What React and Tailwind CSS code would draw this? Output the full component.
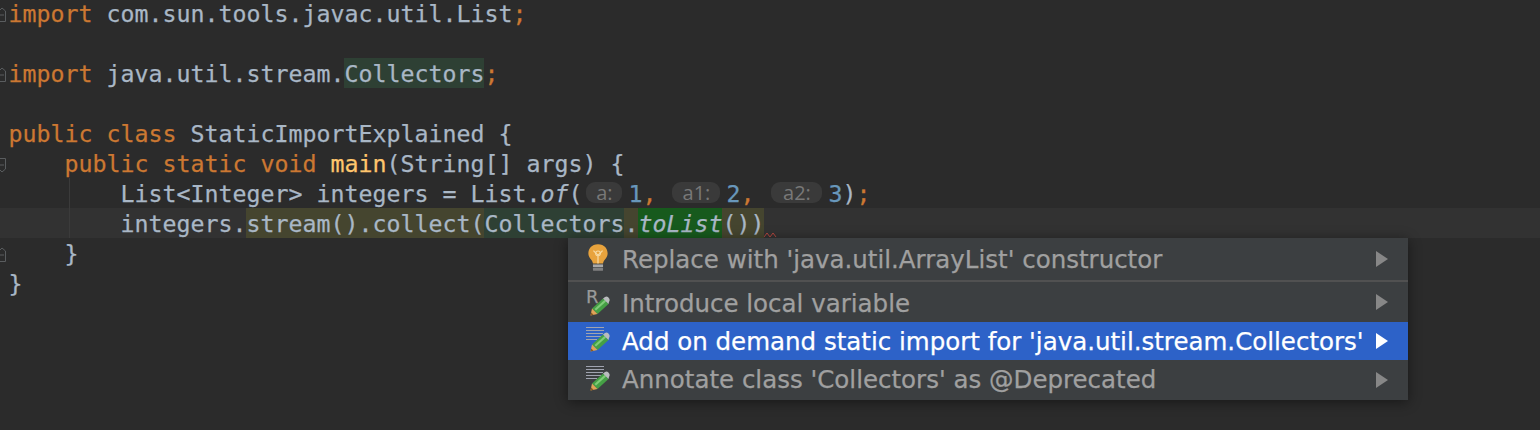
import React from 'react'

const kw = 'text-[#cc7832]'
const num = 'text-[#6897bb]'
const olive = 'inline-block h-[30px] bg-[#45452f]'
const green = 'inline-block h-[30px] bg-[#2e4034]'

function Fold({ up }) {
  return (
    <svg width="7" height="16" viewBox="0 0 7 16" className="mt-[9px] shrink-0" fill="none" stroke="#5a5d5f" strokeWidth="1">
      {up ? <path d="M-1 4 L2 1 L5.5 4 V14.5 H-1" /> : <path d="M-1 1.5 H5.5 V12 L2 15 L-1 12" />}
      <path d="M0 8 H4" />
    </svg>
  )
}

function Line({ fold, active, guide, children }) {
  return (
    <div className={`relative flex h-[30px] whitespace-pre leading-[32px] ${active ? 'bg-[#323232]' : ''}`}>
      <div className="w-[8.5px] shrink-0">{fold}</div>
      {guide && <div className="absolute left-[69px] top-0 h-full w-px bg-[#3b3b3b]" />}
      <div className="text-[#a9b7c6]">{children}</div>
    </div>
  )
}

function Hint({ label, className }) {
  return (
    <span className={`mr-[6px] inline-block h-[21px] rounded-[9px] bg-[#3a3a3a] text-center align-[2px] font-['Open_Sans',sans-serif] text-[20px] leading-[21px] text-[#787878] [-webkit-text-stroke:0px] ${className}`}>
      {label}
    </span>
  )
}

function Pencil() {
  return (
    <svg width="20" height="20" viewBox="0 0 20 20" className="absolute left-[4px] top-[3px]">
      <path d="M2 12.5 L13 2.5 L18.5 8 L7.5 18 Z" fill="#45a045" />
      <path d="M4.5 13 L14.5 4 L16 5.5 L6 14.5 Z" fill="#7fcb78" />
      <path d="M13 2.5 L15 1 Q16.5 0 18 1 L19.5 3 Q20 4.5 19 6 L18.5 8 Z" fill="#b9bcbd" />
      <path d="M2 12.5 L7.5 18 L0.5 19.5 Z" fill="#e0a458" />
      <path d="M0.5 19.5 L1.2 16.5 L3.6 18.8 Z" fill="#8a5a22" />
    </svg>
  )
}

function ItemIcon({ type }) {
  if (type === 'bulb') {
    return (
      <svg width="22" height="30" viewBox="0 0 24 32" className="ml-px mt-[-2px]">
        <path d="M12 1 C5 1 1.5 6 1.5 11 C1.5 16 6 18 6.5 22 H17.5 C18 18 22.5 16 22.5 11 C22.5 6 19 1 12 1 Z" fill="#e8a33d" />
        <path d="M7 8 L12 13 L17 8 M12 13 V22" stroke="#f6d9a0" strokeWidth="1.4" fill="none" />
        <circle cx="12" cy="11" r="2.6" stroke="#f6d9a0" strokeWidth="1.2" fill="none" />
        <rect x="6.5" y="23" width="11" height="3" fill="#a8a8a8" />
        <rect x="6.5" y="26.5" width="11" height="3.5" rx="1" fill="#808080" />
      </svg>
    )
  }
  return (
    <div className={`relative h-[24px] w-[24px] ${type === 'r' ? 'mt-[6px]' : ''}`}>
      {type === 'r' && <span className="absolute left-0 top-[-6px] text-[18px] leading-[20px] text-[#9a9a9a]">R</span>}
      {type === 'lines' && (
        <div className="absolute left-0 top-[-2px] flex flex-col gap-[2px]">
          {[18, 18, 17, 15, 11].map((w, i) => (
            <div key={i} className="h-px bg-[#a0a4b0]" style={{ width: w }} />
          ))}
        </div>
      )}
      <Pencil />
    </div>
  )
}

function MenuItem({ icon, label, selected, className, textClass }) {
  return (
    <div className={`relative flex items-center pl-[18px] ${selected ? 'bg-[#2d62c8] text-white' : 'text-[#a0a0a0]'} ${className}`}>
      <div className="flex w-[36px] shrink-0 items-center">
        <ItemIcon type={icon} />
      </div>
      <span className={`whitespace-pre ${textClass}`}>{label}</span>
      <div className={`absolute right-[20px] h-0 w-0 border-y-[8px] border-l-[12px] border-y-transparent ${selected ? 'border-l-white' : 'border-l-[#878787]'}`} />
    </div>
  )
}

export default function App() {
  return (
    <div className="relative h-[430px] w-[1540px] overflow-hidden bg-[#2b2b2b] font-['DejaVu_Sans_Mono',monospace] text-[23.25px] [-webkit-text-stroke:0.25px]">
      <div className="-mt-[2px]">
        <Line fold={<Fold up />}>
          <span className={kw}>import</span> com.sun.tools.javac.util.List<span className={kw}>;</span>
        </Line>
        <Line />
        <Line fold={<Fold up />}>
          <span className={kw}>import</span> java.util.stream.<span className={green}>Collectors</span><span className={kw}>;</span>
        </Line>
        <Line />
        <Line>
          <span className={kw}>public class</span> StaticImportExplained {'{'}
        </Line>
        <Line fold={<Fold />}>
          {'    '}<span className={kw}>public static void</span> <span className="text-[#ffc66d]">main</span>(String[] args) {'{'}
        </Line>
        <Line guide>
          {'        '}List&lt;Integer&gt; integers = List.<span className="italic">of</span>(<Hint label="a:" className="ml-[4px] w-[36px]" /><span className={num}>1</span><span className={kw}>,</span> <Hint label="a1:" className="ml-[2px] w-[48px]" /><span className={num}>2</span><span className={kw}>,</span> <Hint label="a2:" className="ml-[3px] w-[51px]" /><span className={num}>3</span>)<span className={kw}>;</span>
        </Line>
        <Line guide active>
          {'        '}integers.<span className={olive}>stream().collect(</span><span className={green}>Collectors</span><span className={olive}>.</span><span className="inline-block h-[30px] bg-[#175a1d] italic">toList</span><span className={olive}>())</span>
        </Line>
        <Line fold={<Fold up />}>
          {'    '}{'}'}
        </Line>
        <Line>{'}'}</Line>
      </div>

      <svg width="14" height="6" viewBox="0 0 14 6" className="absolute left-[764px] top-[232px]" fill="none" stroke="#b5473f" strokeWidth="1">
        <path d="M0 5 L3 1 L6 5 L9 1 L12 5" />
      </svg>

      <div className="absolute left-[568px] top-[238px] w-[840px] bg-[#3c3f41] font-['DejaVu_Sans',sans-serif] text-[24.5px] shadow-[0_2px_12px_rgba(0,0,0,0.45)]">
        <MenuItem icon="bulb" label="Replace with 'java.util.ArrayList' constructor" className="h-[42px]" textClass="pt-[2px]" />
        <div className="h-[2px] bg-[#515151]" />
        <MenuItem icon="r" label="Introduce local variable" className="h-[40px]" textClass="pt-[4px]" />
        <MenuItem icon="lines" label="Add on demand static import for 'java.util.stream.Collectors'" selected className="h-[38px]" textClass="pt-[2px]" />
        <MenuItem icon="lines" label="Annotate class 'Collectors' as @Deprecated" className="h-[40px]" textClass="pt-[1px]" />
      </div>
    </div>
  )
}
